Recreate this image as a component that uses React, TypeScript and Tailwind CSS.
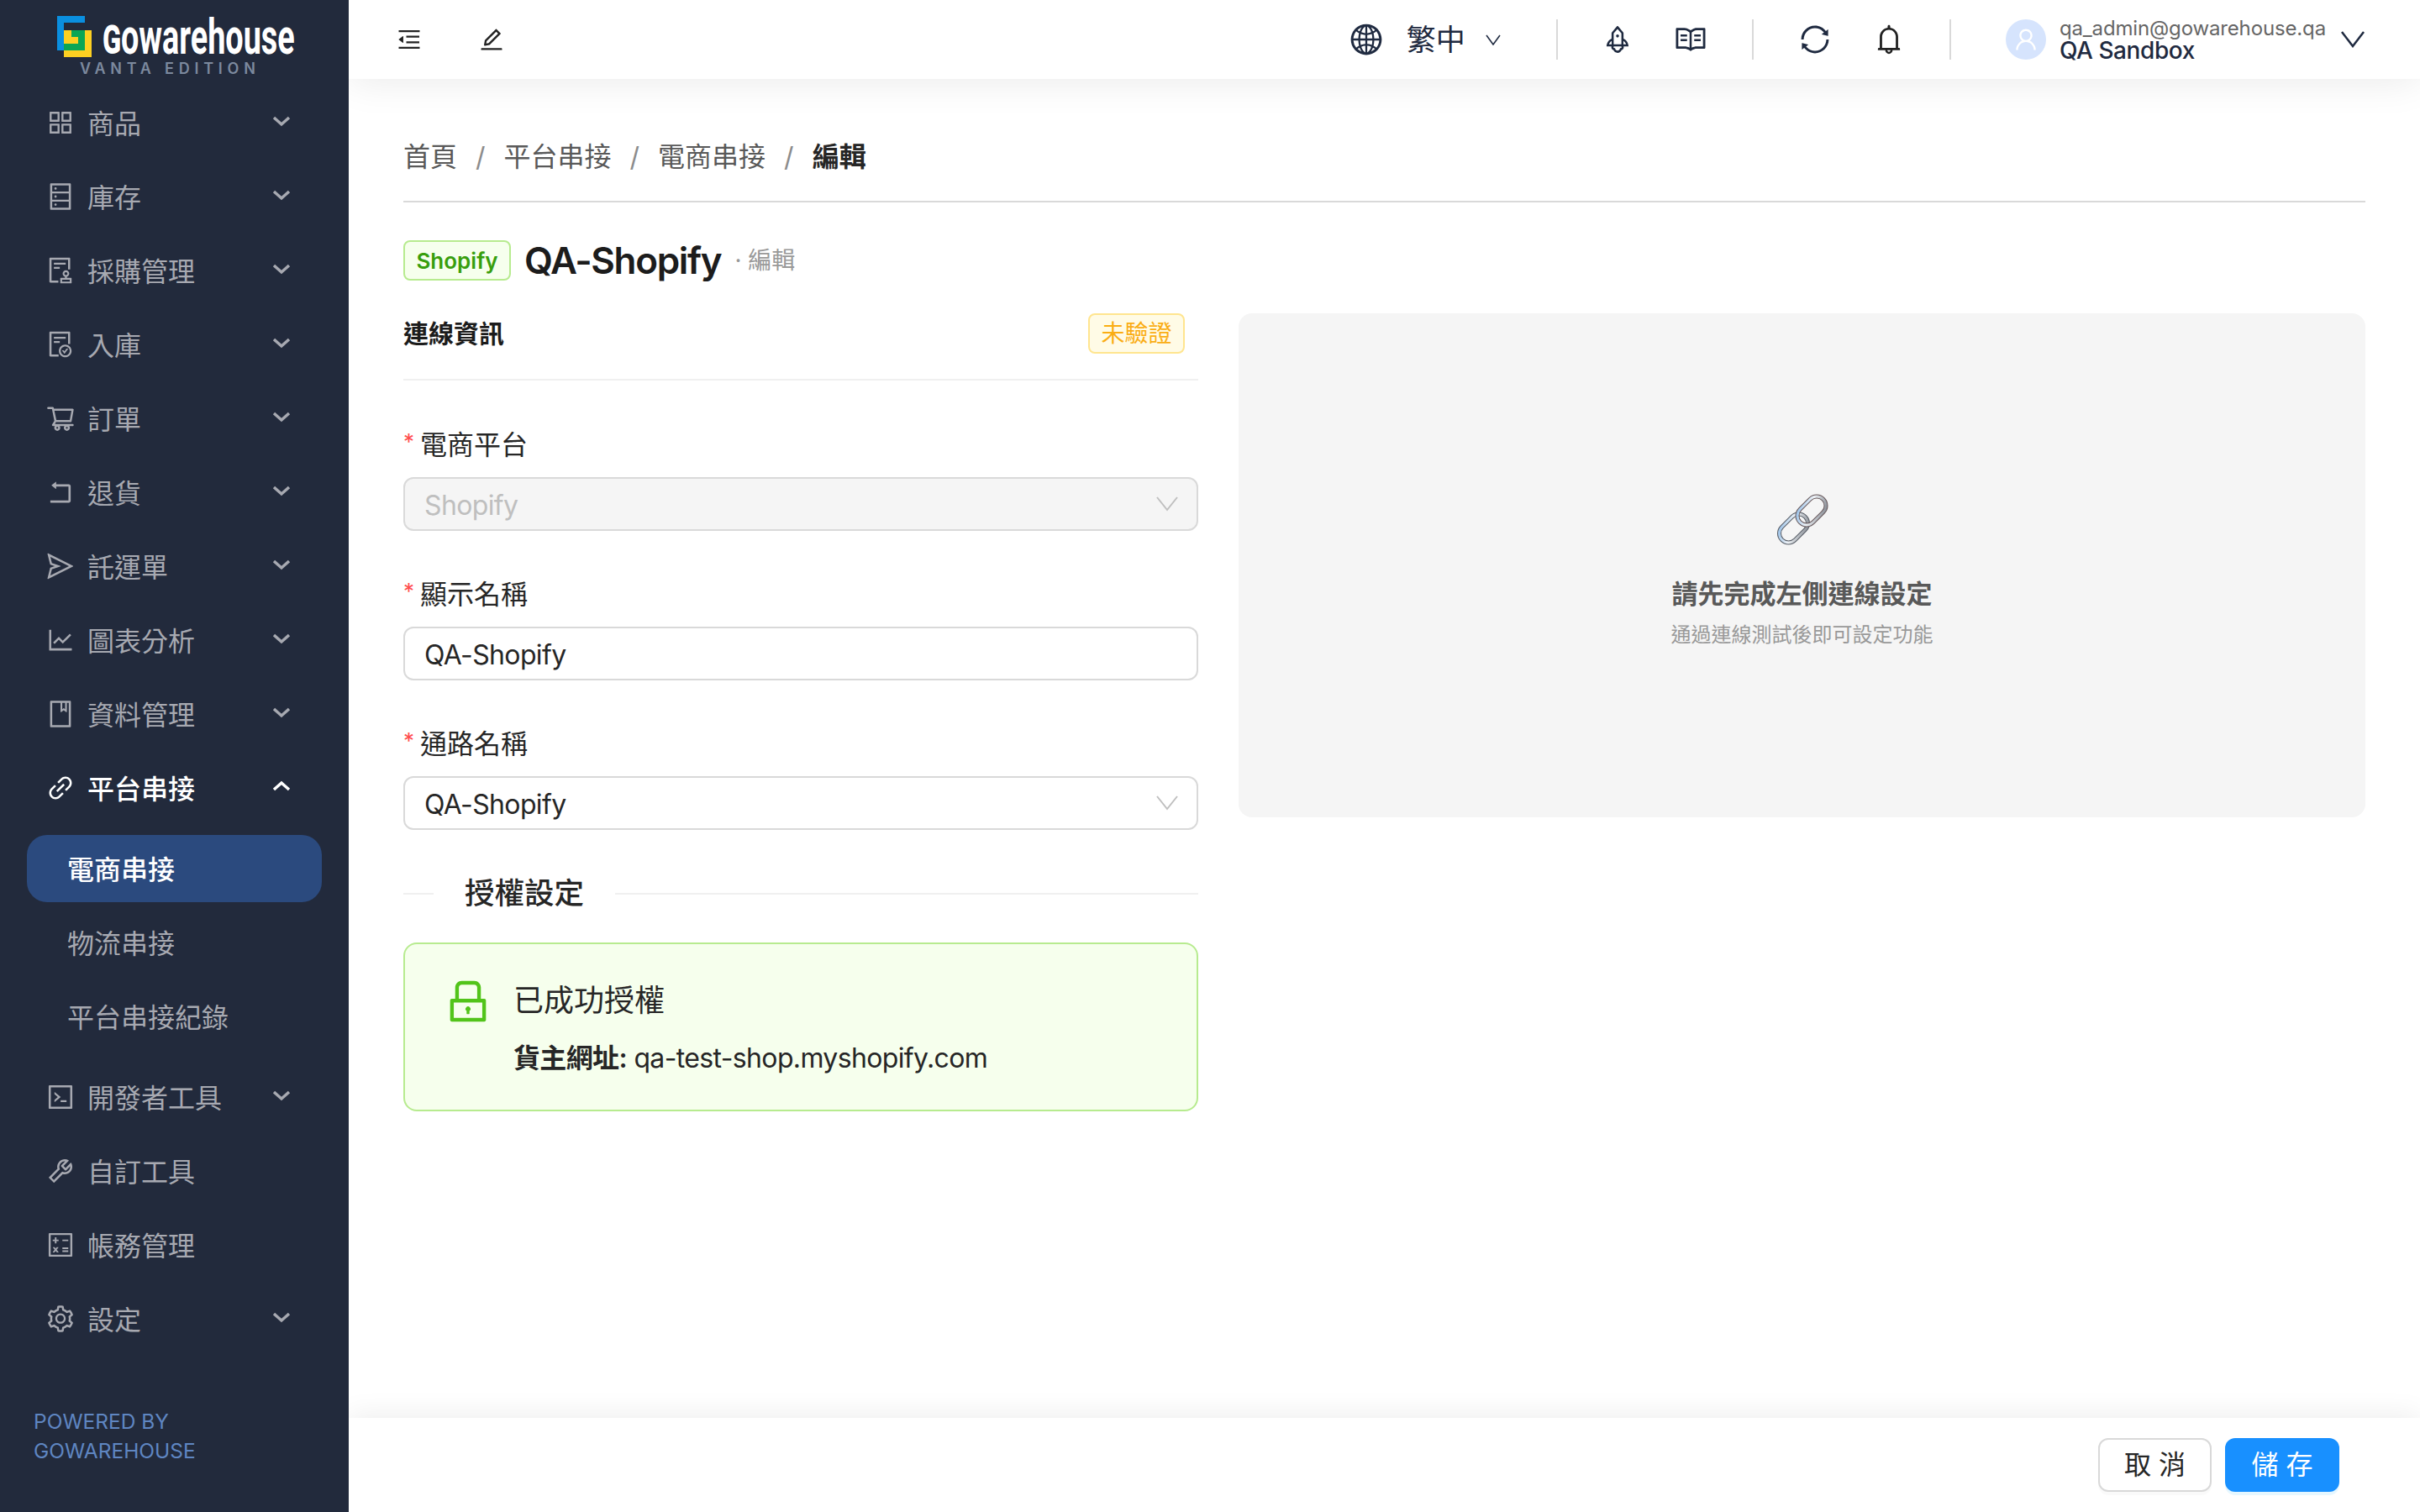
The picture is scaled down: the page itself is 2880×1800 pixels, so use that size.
import type { ReactNode } from "react";
import {
  AiOutlineAppstore, AiOutlineAudit, AiOutlineBell, AiOutlineBook, AiOutlineCalculator, AiOutlineCode,
  AiOutlineDatabase, AiOutlineEdit, AiOutlineFileDone, AiOutlineGlobal, AiOutlineLineChart,
  AiOutlineLink, AiOutlineLock, AiOutlineMenuFold, AiOutlineRead, AiOutlineRocket, AiOutlineRollback,
  AiOutlineSend, AiOutlineSetting, AiOutlineShoppingCart, AiOutlineSync, AiOutlineTool, AiOutlineUser,
} from "react-icons/ai";

function Chevron({ up = false }: { up?: boolean }) {
  return (
    <svg width="22" height="14" viewBox="0 0 22 14" fill="none" stroke="currentColor" strokeWidth="3.5" className="mb-1 mr-[69px] ml-auto shrink-0">
      <polyline points={up ? "2,11 11,3 20,11" : "2,3 11,11 20,3"} />
    </svg>
  );
}

function MenuRow({ icon, label, arrow = true, open = false }: { icon: ReactNode; label: string; arrow?: boolean; open?: boolean }) {
  return (
    <div className={`flex h-20 mb-2 items-center gap-[14px] pl-[54px] text-[32px] ${open ? "text-white font-medium" : "text-[#a7a9b1]"}`}>
      <span className="text-[36px] shrink-0">{icon}</span>
      <span className="pt-1">{label}</span>
      {arrow && <Chevron up={open} />}
    </div>
  );
}

function SubRow({ label, active = false }: { label: string; active?: boolean }) {
  return (
    <div className={`flex h-20 mb-2 mx-8 items-center rounded-3xl pl-12 pt-1 text-[32px] ${active ? "bg-[#2b4a7e] text-white font-medium" : "text-[#a7a9b1]"}`}>
      {label}
    </div>
  );
}

function Sidebar() {
  return (
    <aside className="relative z-20 flex w-[415px] shrink-0 flex-col bg-[#222a3c]">
      {/* Logo */}
      <div className="h-[106px] pl-[68px] pt-[19px]">
        <div className="flex h-[49px] items-end gap-[13px]">
          <svg width="41" height="49" viewBox="0 0 41 49" className="shrink-0">
            <polygon points="0,0 33,0 33,8 8,8 8,41 0,41" fill="#0a8fe0" />
            <rect x="8" y="17" width="33" height="32" fill="#fdd022" />
            <polygon points="17,17 33,17 33,41 8,41 8,33 25,33 25,25 17,25" fill="#0aa655" />
          </svg>
          <span className="mb-[3px] inline-block w-[226px] origin-left scale-x-[0.63] whitespace-nowrap font-['Roboto',sans-serif] text-[60px] leading-[42px] font-bold text-white">
            <span className="[font-variant:small-caps]">g</span>owarehouse
          </span>
        </div>
        <div className="ml-[27px] mt-[3px] whitespace-nowrap text-[18px] leading-[22px] font-semibold tracking-[0.32em] text-[#7c899e]">VANTA EDITION</div>
      </div>

      <MenuRow icon={<AiOutlineAppstore />} label="商品" />
      <MenuRow icon={<AiOutlineDatabase />} label="庫存" />
      <MenuRow icon={<AiOutlineAudit />} label="採購管理" />
      <MenuRow icon={<AiOutlineFileDone />} label="入庫" />
      <MenuRow icon={<AiOutlineShoppingCart />} label="訂單" />
      <MenuRow icon={<AiOutlineRollback />} label="退貨" />
      <MenuRow icon={<AiOutlineSend />} label="託運單" />
      <MenuRow icon={<AiOutlineLineChart />} label="圖表分析" />
      <MenuRow icon={<AiOutlineBook />} label="資料管理" />
      <MenuRow icon={<AiOutlineLink />} label="平台串接" open />
      <div className="pt-2">
        <SubRow label="電商串接" active />
        <SubRow label="物流串接" />
        <SubRow label="平台串接紀錄" />
      </div>
      <div className="pt-2">
        <MenuRow icon={<AiOutlineCode />} label="開發者工具" />
        <MenuRow icon={<AiOutlineTool />} label="自訂工具" arrow={false} />
        <MenuRow icon={<AiOutlineCalculator />} label="帳務管理" arrow={false} />
        <MenuRow icon={<AiOutlineSetting />} label="設定" />
      </div>

      <div className="mt-auto pb-[55px] pl-10 text-[24.5px] leading-[35px] text-[#5f86c2]">
        POWERED BY
        <br />
        GOWAREHOUSE
      </div>
    </aside>
  );
}

function Divider() {
  return <div className="h-12 w-0.5 bg-[#d9d9d9]" />;
}

function Header() {
  return (
    <header className="relative z-10 flex h-[94px] shrink-0 items-center bg-white pl-14 shadow-[0_2px_48px_rgba(0,0,0,0.09)]">
      <AiOutlineMenuFold className="text-[32px] text-[#222]" />
      <AiOutlineEdit className="ml-[66px] text-[32px] text-[#222]" />
      <div className="ml-auto flex items-center text-[#1f2a40]">
        <AiOutlineGlobal className="text-[42px]" />
        <span className="ml-[27px] text-[35px] leading-none">繁中</span>
        <svg width="18" height="13" viewBox="0 0 18 13" fill="none" stroke="currentColor" strokeWidth="1.6" className="ml-6">
          <polyline points="1,1 9,12 17,1" />
        </svg>
        <div className="ml-[66px]"><Divider /></div>
        <AiOutlineRocket className="ml-[52px] text-[38px]" />
        <AiOutlineRead className="ml-12 text-[40px]" />
        <div className="ml-[53px]"><Divider /></div>
        <AiOutlineSync className="ml-[53px] text-[40px]" />
        <AiOutlineBell className="ml-12 text-[40px] text-[#222]" />
        <div className="ml-[52px]"><Divider /></div>
        <div className="ml-[65px] flex h-12 w-12 items-center justify-center rounded-full bg-[#d6e4fd] text-white">
          <AiOutlineUser className="text-[32px]" />
        </div>
        <div className="ml-4 flex h-12 flex-col justify-center">
          <div className="text-[24px] leading-[26px] tracking-[-0.006em] text-[#666]">qa_admin@gowarehouse.qa</div>
          <div className="text-[28px] leading-[26px] font-medium tracking-[-0.015em] text-[#1f2a40]">QA Sandbox</div>
        </div>
        <svg width="28" height="20" viewBox="0 0 28 20" fill="none" stroke="currentColor" strokeWidth="2.5" className="ml-[18px] mr-[66px]">
          <polyline points="1,1 14,18 27,1" />
        </svg>
      </div>
    </header>
  );
}

function Field({ label, value, select = false, disabled = false }: { label: string; value: string; select?: boolean; disabled?: boolean }) {
  return (
    <div className="mb-[50px]">
      <div className="mb-4 flex h-12 items-center pt-1 text-[32px] leading-[48px] text-[#262626]">
        <span className="mb-2 w-5 text-[26px] leading-none text-[#ff4d4f]">*</span>
        {label}
      </div>
      <div className={`flex h-16 items-center rounded-xl border-2 border-[#d9d9d9] pl-[23px] pr-[22px] text-[32px] tracking-[-0.02em] ${disabled ? "bg-[#f5f5f5] text-[#bfbfbf]" : "bg-white text-[#262626]"}`}>
        <span className="pt-1">{value}</span>
        {select && (
          <svg width="26" height="18" viewBox="0 0 26 18" fill="none" stroke="#bfbfbf" strokeWidth="2" className="ml-auto">
            <polyline points="1,1 13,16 25,1" />
          </svg>
        )}
      </div>
    </div>
  );
}

function ChainEmoji() {
  return (
    <svg width="64" height="64" viewBox="0 0 64 64" fill="none">
      <defs>
        <linearGradient id="steel" x1="0" y1="0" x2="1" y2="1">
          <stop offset="0" stopColor="#8fbbe6" />
          <stop offset="0.45" stopColor="#eef2f6" />
          <stop offset="1" stopColor="#7d828a" />
        </linearGradient>
      </defs>
      <g transform="rotate(-45 21.5 42)">
        <rect x="2" y="31" width="39" height="22" rx="11" stroke="#575d66" strokeWidth="5" />
        <rect x="2" y="31" width="39" height="22" rx="11" stroke="url(#steel)" strokeWidth="3" />
      </g>
      <g transform="rotate(-45 43 21)">
        <rect x="23.5" y="10" width="39" height="22" rx="11" stroke="#67585b" strokeWidth="5" />
        <rect x="23.5" y="10" width="39" height="22" rx="11" stroke="url(#steel)" strokeWidth="3" />
      </g>
    </svg>
  );
}

function Content() {
  return (
    <main className="flex-1 overflow-hidden bg-white px-[65px] pt-[67px]">
      {/* Breadcrumb */}
      <nav className="flex h-12 items-center pt-1 text-[32px] text-[#595959]">
        <span>首頁</span>
        <span className="mx-[22px] text-[#8c8c8c]">/</span>
        <span>平台串接</span>
        <span className="mx-[22px] text-[#8c8c8c]">/</span>
        <span>電商串接</span>
        <span className="mx-[22px] text-[#8c8c8c]">/</span>
        <span className="font-semibold text-[#262626]">編輯</span>
      </nav>
      <div className="mt-[30px] h-0.5 bg-[#d9d9d9]" />

      {/* Title */}
      <div className="mt-[45px] flex h-12 items-center">
        <span className="flex h-12 w-32 items-center justify-center rounded-lg border-2 border-[#b7eb8f] bg-[#f6ffed] text-[26px] font-semibold text-[#389e0d]">Shopify</span>
        <span className="ml-4 text-[44px] font-semibold tracking-[-0.03em] text-[#1c1c1c]">QA-Shopify</span>
        <span className="ml-4 text-[28px] text-[#999]">· 編輯</span>
      </div>

      <div className="mt-[39px] flex gap-12">
        {/* Left form */}
        <div className="w-[946px] shrink-0">
          <div className="flex items-start justify-between border-b-2 border-[#f0f0f0] pb-[30px] pr-4">
            <span className="text-[30px] leading-[48px] font-semibold text-[#1c1c1c]">連線資訊</span>
            <span className="flex h-12 w-[115px] items-center justify-center rounded-lg border-2 border-[#ffe58f] bg-[#fffbe6] text-[28px] text-[#faad14]">未驗證</span>
          </div>
          <div className="mt-[51px]">
            <Field label="電商平台" value="Shopify" select disabled />
            <Field label="顯示名稱" value="QA-Shopify" />
            <Field label="通路名稱" value="QA-Shopify" select />
          </div>

          <div className="mt-[52px] flex h-12 items-center">
            <div className="h-0.5 w-9 bg-[#f0f0f0]" />
            <span className="mx-[37px] text-[35.5px] font-medium text-[#262626]">授權設定</span>
            <div className="h-0.5 flex-1 bg-[#f0f0f0]" />
          </div>

          <div className="mt-[34px] flex h-[201px] rounded-2xl border-2 border-[#b7eb8f] bg-[#f6ffed] pl-[44px] pt-[37px]">
            <AiOutlineLock className="shrink-0 text-[62px] text-[#52c41a]" />
            <div className="ml-[23px] mt-[5px]">
              <div className="text-[36px] leading-[50px] text-[#262626]">已成功授權</div>
              <div className="mt-5 text-[32px] leading-[48px] tracking-[-0.02em] text-[#262626]">
                <span className="font-semibold">貨主網址:</span> qa-test-shop.myshopify.com
              </div>
            </div>
          </div>
        </div>

        {/* Right placeholder */}
        <div className="flex h-[600px] flex-1 flex-col items-center rounded-2xl bg-[#f5f5f5] pt-[214px]">
          <ChainEmoji />
          <div className="mt-[34px] text-[31px] leading-[44px] font-semibold text-[#595959]">請先完成左側連線設定</div>
          <div className="mt-[9px] text-[24px] leading-9 text-[#999]">通過連線測試後即可設定功能</div>
        </div>
      </div>
    </main>
  );
}

function Footer() {
  return (
    <footer className="relative z-10 flex h-[112px] shrink-0 items-start justify-end gap-4 bg-white pr-24 pt-6 shadow-[0_-2px_32px_rgba(0,0,0,0.08)]">
      <button className="h-16 w-[135px] rounded-xl border-2 border-[#d9d9d9] bg-white text-[32px] text-[#262626] shadow-[0_4px_0_rgba(0,0,0,0.02)]">取 消</button>
      <button className="h-16 w-[136px] rounded-xl bg-[#1890ff] text-[32px] text-white shadow-[0_4px_0_#e6f7ff]">儲 存</button>
    </footer>
  );
}

export default function App() {
  return (
    <div className="flex h-[1800px] w-[2880px] overflow-hidden font-['Inter','Noto_Sans_CJK_TC',sans-serif]">
      <Sidebar />
      <div className="flex min-w-0 flex-1 flex-col">
        <Header />
        <Content />
        <Footer />
      </div>
    </div>
  );
}
